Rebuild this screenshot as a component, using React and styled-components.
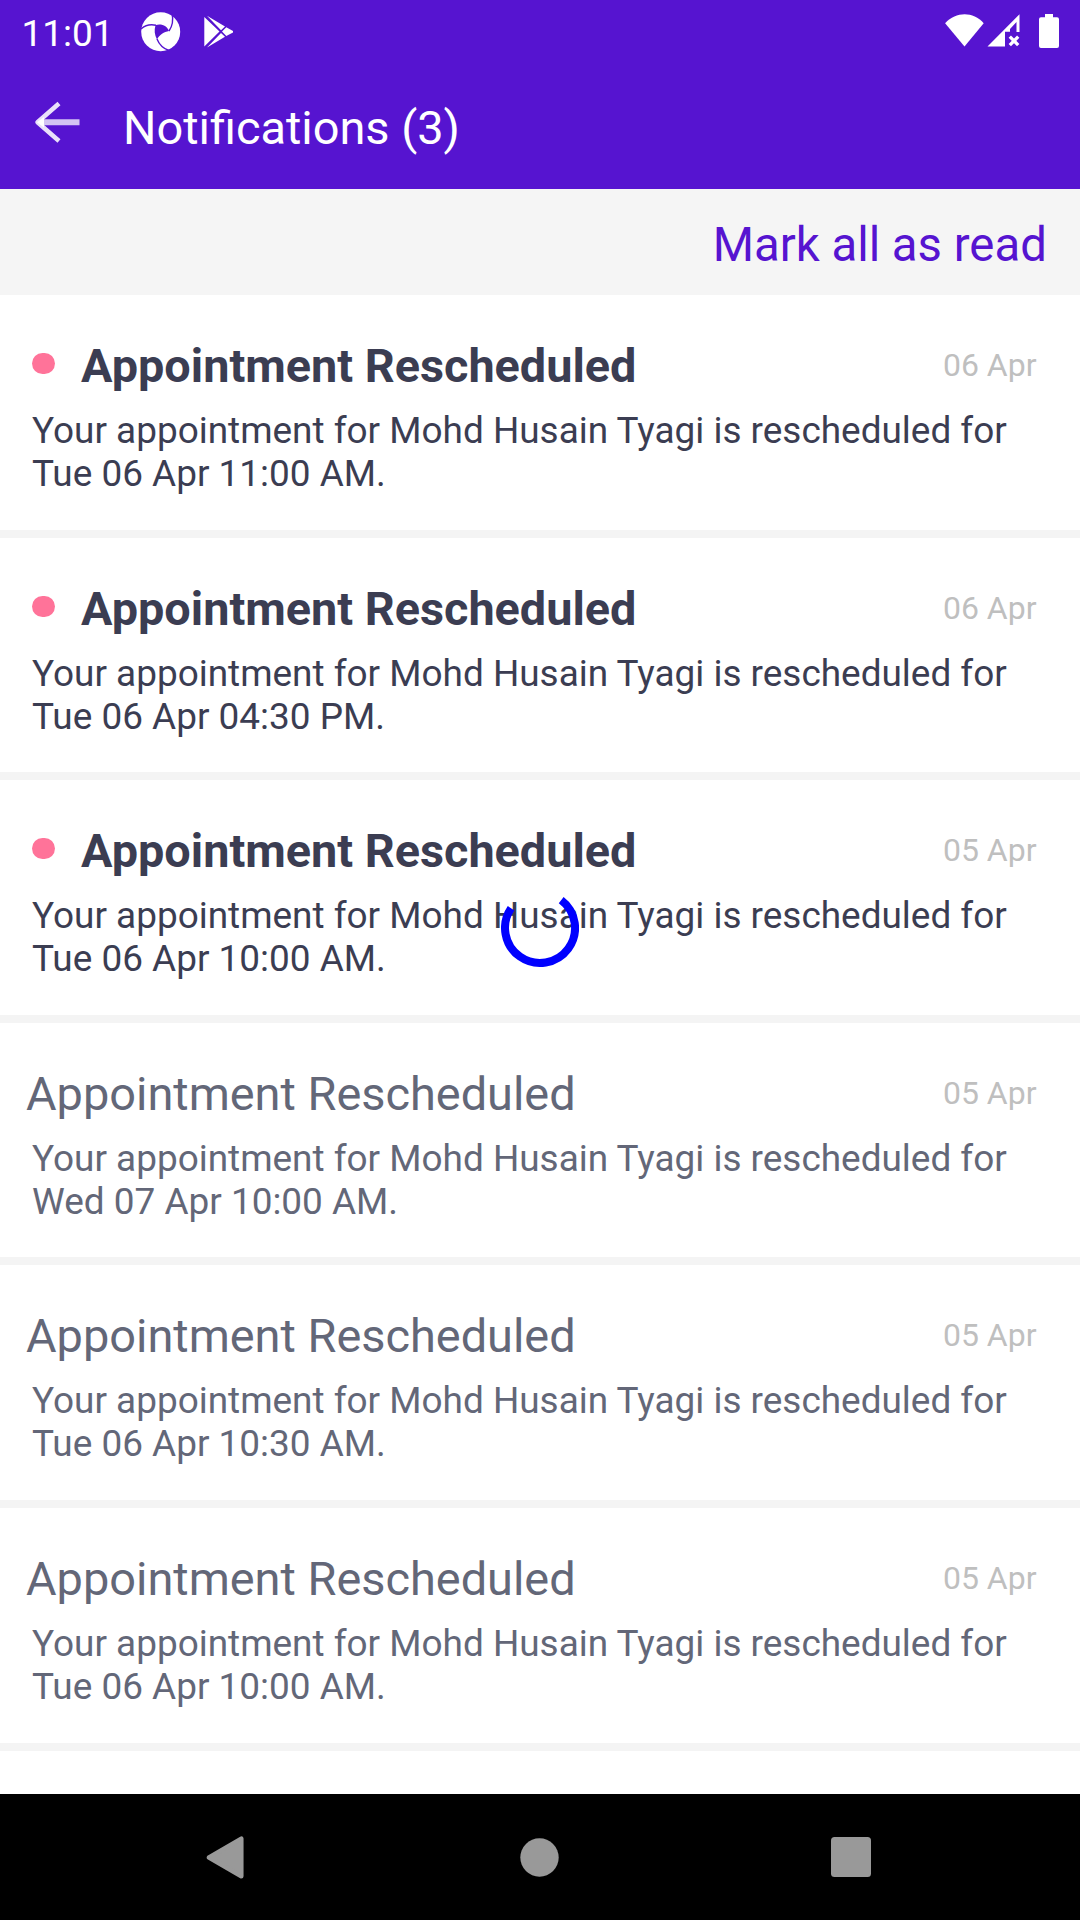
import React from "react";
import styled, { createGlobalStyle } from "styled-components";

const GlobalStyle = createGlobalStyle`
  * { box-sizing: border-box; }
  body { margin: 0; background: #fff; font-family: Roboto, sans-serif; }
  h1, h2, p, ul { margin: 0; padding: 0; font-weight: 400; }
  button { border: 0; padding: 0; background: none; font: inherit; color: inherit; }
  svg { display: block; }
`;

const Screen = styled.main`
  width: 1080px;
  height: 1920px;
  display: flex;
  flex-direction: column;
  position: relative;
  overflow: hidden;
  background: #fff;
`;

const StatusBar = styled.div`
  height: 63px;
  flex: none;
  display: flex;
  align-items: flex-start;
  background: #5614d0;
  color: #fff;
  padding: 0 21px 0 21.5px;
`;

const Clock = styled.time`
  width: 119.5px;
  margin-top: 12px;
  font-size: 37px;
  line-height: 43px;
`;

const Spacer = styled.div`
  flex: 1;
`;

const AppBar = styled.header`
  height: 126px;
  flex: none;
  display: flex;
  background: #5614d0;
  color: #fff;
  padding-left: 33px;
`;

const BackButton = styled.button`
  width: 90px;
  padding-top: 37px;
  display: flex;
  align-items: flex-start;
`;

const Heading = styled.h1`
  padding-top: 37px;
  font-size: 46.9px;
  line-height: 56px;
`;

const ActionBar = styled.div`
  height: 106px;
  flex: none;
  display: flex;
  justify-content: flex-end;
  background: #f5f5f5;
  padding: 28px 33.2px 0 0;
`;

const MarkRead = styled.button`
  height: 56px;
  color: #5614d0;
  font-size: 47.3px;
  line-height: 56px;
`;

const List = styled.ul`
  flex: 1;
  min-height: 0;
  overflow: hidden;
  list-style: none;
`;

const Row = styled.li`
  height: 242.6px;
  border-bottom: 8px solid #f4f4f4;
  padding: 43px 43px 0 32px;
  color: ${(p) => (p.$unread ? "#3b3d52" : "#636778")};
`;

const RowHead = styled.div`
  display: flex;
  height: 71px;
`;

const Dot = styled.span`
  width: 23px;
  height: 21px;
  flex: none;
  margin: 15px 26px 0 0;
  border-radius: 10.5px;
  background: #ff7399;
`;

const Title = styled.h2`
  flex: 1;
  font-size: ${(p) => (p.$unread ? 46.8 : 46.9)}px;
  line-height: 56px;
  font-weight: ${(p) => (p.$unread ? 700 : 400)};
  margin-left: ${(p) => (p.$unread ? 0 : -6)}px;
`;

const DateLabel = styled.time`
  margin: 8px 0.5px 0 0;
  font-size: 32px;
  line-height: 38px;
  color: #bfbfbf;
`;

const Message = styled.p`
  font-size: 36.94px;
  line-height: 43px;
  white-space: pre-line;
`;

const Loader = styled.div`
  position: absolute;
  left: 501px;
  top: 889px;
`;

const NavBar = styled.nav`
  height: 126px;
  flex: none;
  display: flex;
  align-items: center;
  justify-content: space-between;
  background: #000;
  padding: 0 209px 0 206px;
`;

const IconSlot = styled.span`
  margin: ${(p) => p.$margin || 0};
`;

const PinwheelIcon = () => (
  <svg width="40" height="40" viewBox="0 0 40 40">
    <circle cx="19.7" cy="19.7" r="19.5" fill="#fff" />
    <path d="M14.5 13.2C20 11 26.5 14 28 19C23 20 18.5 22.5 16 27.5C13.5 23 13 18 14.5 13.2Z" fill="#5614d0" />
    <g fill="none" stroke="#5614d0" strokeWidth="1.4">
      <path d="M0 17C4 13.2 9.500 12 15 13.200" />
      <path d="M31 1C32.500 8 31.500 14 28 19" />
      <path d="M16 27C18 32 22 36.500 28 38.500" />
    </g>
  </svg>
);

const PlayIcon = () => (
  <svg width="30" height="34" viewBox="0 0 30 34">
    <path d="M.3 2L15.500 16.500L.3 31.500Z M3 .8L21 11.500L17 15.200Z M3 32.500L17 18L21 21.800Z M18 16.600L22.300 12.300L29 16L29 17.500L22.300 21Z" fill="#fff" />
  </svg>
);

const WifiIcon = () => (
  <svg width="40" height="33" viewBox="0 0 40 33">
    <path d="M.1 9.200C11.300-2.700 28.100-2.700 38.700 9.200L19.500 32.600Z" fill="#fff" />
  </svg>
);

const SignalIcon = () => (
  <svg width="34" height="33" viewBox="0 0 34 33">
    <path d="M.5 32.500L32.500 .3V18H29.500V8L23 15V17.800H18V32.500Z" fill="#fff" />
    <path d="M22.800 22.700L31.200 31.100M31.200 22.700L22.800 31.100" stroke="#fff" strokeWidth="3.300" />
  </svg>
);

const BatteryIcon = () => (
  <svg width="20" height="34" viewBox="0 0 20 34">
    <path d="M6 0H14V3.300H18A2 2 0 0 1 20 5.300V32A2 2 0 0 1 18 34H2A2 2 0 0 1 0 32V5.300A2 2 0 0 1 2 3.300H6Z" fill="#fff" />
  </svg>
);

const BackIcon = () => (
  <svg width="47" height="44" viewBox="0 0 47 44" fill="none">
    <path d="M7 22.300H46.500" stroke="#d3c3f3" strokeWidth="6" />
    <path d="M26 3.500L4.500 22.300L26 41" stroke="#e9e0fa" strokeWidth="4.500" strokeLinejoin="round" />
    <path d="M4 22.300L11 17V27.500Z" fill="#fff" />
  </svg>
);

const notifications = [
  { unread: true, date: "06 Apr", when: "Tue 06 Apr 11:00 AM." },
  { unread: true, date: "06 Apr", when: "Tue 06 Apr 04:30 PM." },
  { unread: true, date: "05 Apr", when: "Tue 06 Apr 10:00 AM." },
  { unread: false, date: "05 Apr", when: "Wed 07 Apr 10:00 AM." },
  { unread: false, date: "05 Apr", when: "Tue 06 Apr 10:30 AM." },
  { unread: false, date: "05 Apr", when: "Tue 06 Apr 10:00 AM." },
];

export default function App() {
  return (
    <Screen>
      <GlobalStyle />
      <StatusBar>
        <Clock>11:01</Clock>
        <IconSlot $margin="12px 0 0 0"><PinwheelIcon /></IconSlot>
        <IconSlot $margin="15px 0 0 23px"><PlayIcon /></IconSlot>
        <Spacer />
        <IconSlot $margin="14px 2px 0 0"><WifiIcon /></IconSlot>
        <IconSlot $margin="14px 18px 0 0"><SignalIcon /></IconSlot>
        <IconSlot $margin="14px 0 0 0"><BatteryIcon /></IconSlot>
      </StatusBar>
      <AppBar>
        <BackButton aria-label="Back"><BackIcon /></BackButton>
        <Heading>Notifications (3)</Heading>
      </AppBar>
      <ActionBar>
        <MarkRead>Mark all as read</MarkRead>
      </ActionBar>
      <List>
        {notifications.map((n, i) => (
          <Row key={i} $unread={n.unread}>
            <RowHead>
              {n.unread && <Dot />}
              <Title $unread={n.unread}>Appointment Rescheduled</Title>
              <DateLabel>{n.date}</DateLabel>
            </RowHead>
            <Message>{"Your appointment for Mohd Husain Tyagi is rescheduled for\n" + n.when}</Message>
          </Row>
        ))}
      </List>
      <Loader>
        <svg width="78" height="79" viewBox="-39 -39.300 78 79">
          <path d="M21.200-28.200A35 35 0 1 1-28.900-20" fill="none" stroke="#00f" strokeWidth="8" />
        </svg>
      </Loader>
      <NavBar>
        <svg width="42" height="43" viewBox="0 0 42 43">
          <path d="M3 21.500L35.300 2.700V40.300Z" fill="#999" stroke="#999" strokeWidth="4.500" strokeLinejoin="round" />
        </svg>
        <svg width="39" height="39" viewBox="0 0 39 39">
          <circle cx="19.500" cy="19.500" r="19.200" fill="#999" />
        </svg>
        <svg width="40" height="40" viewBox="0 0 40 40">
          <rect width="40" height="40" rx="3.500" fill="#999" />
        </svg>
      </NavBar>
    </Screen>
  );
}
